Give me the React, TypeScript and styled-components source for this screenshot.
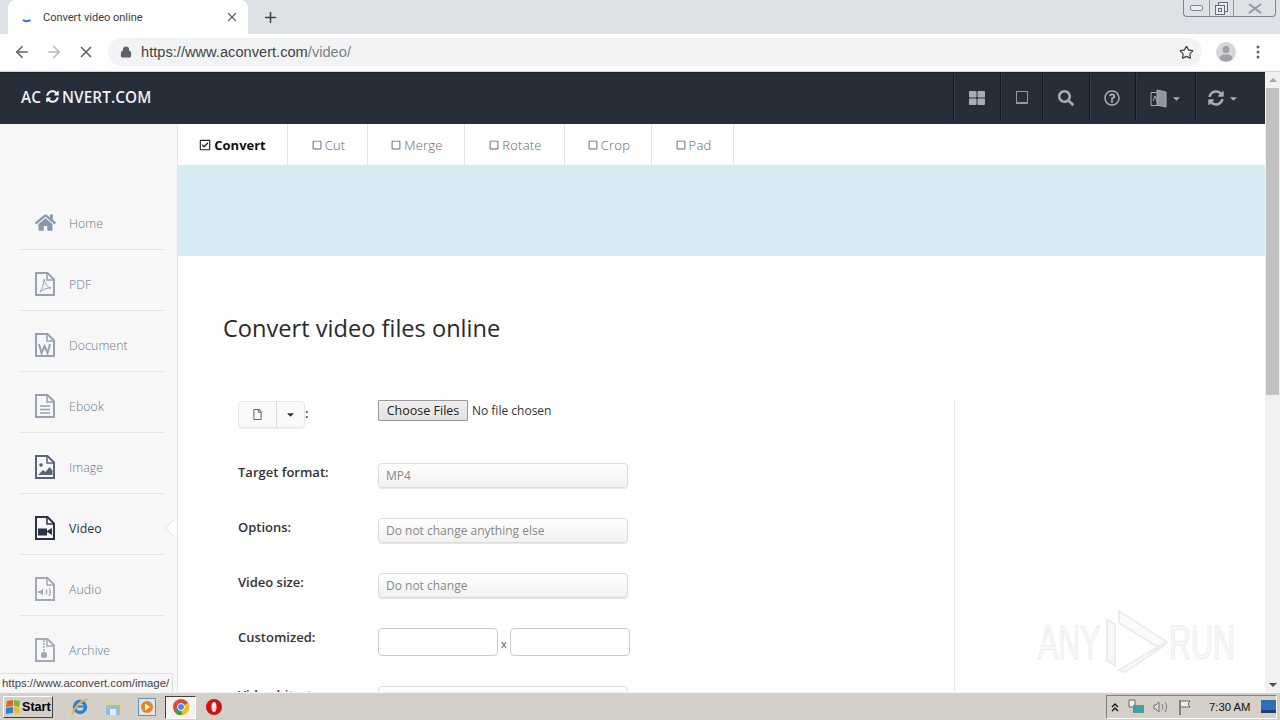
import React from "react";
import styled, { createGlobalStyle } from "styled-components";
import { FaHome, FaThLarge, FaSearch, FaRegQuestionCircle, FaSyncAlt, FaRegCheckSquare, FaRegSquare, FaCaretDown, FaRegFile } from "react-icons/fa";
import { ArrowLeft, ArrowRight, X, Plus, Star, Lock } from "lucide-react";

const Global = createGlobalStyle`
  html, body { margin: 0; padding: 0; overflow: hidden; background: #fff; }
  * { box-sizing: border-box; }
`;

const Window = styled.div`
  width: 1280px; height: 720px; display: flex; flex-direction: column; position: relative; overflow: hidden;
  font-family: "Open Sans", sans-serif;
`;
const TabStrip = styled.div`
  height: 34px; flex: none; background: #dee1e6; display: flex; padding-left: 8px;
`;
const Tab = styled.div`
  width: 240px; background: #fff; border-radius: 8px 8px 0 0; display: flex; align-items: center;
  padding: 0 9px 0 14px; font: 11px Roboto, sans-serif; color: #3c4043;
`;
const TabSpinner = styled.svg`width: 10px; height: 16px; margin-right: 11px; margin-top: 4px; flex: none;`;
const TabTitle = styled.span`flex: 1;`;
const NewTab = styled.div`
  width: 32px; margin-left: 6px; display: flex; align-items: center; justify-content: center; color: #444;
`;
const WinControls = styled.div`
  margin-left: auto; margin-right: 4px; align-self: flex-start; width: 93px; height: 17px; display: flex;
  border: 1px solid #7d8796; border-top: none; border-radius: 0 0 4px 4px; color: #59626e;
`;
const WinBtn = styled.div<{ $w: number; $sep?: boolean }>`
  width: ${p => p.$w}px; display: flex; align-items: center; justify-content: center;
  border-right: ${p => (p.$sep ? "1px solid #8f98a5" : "none")};
`;
const Toolbar = styled.div`
  height: 38px; flex: none; background: #fff; display: flex; align-items: center; padding: 0 6px 1px; border-bottom: 1px solid #d5d5d5;
`;
const NavBtn = styled.div<{ $c?: string }>`
  width: 32px; height: 32px; display: flex; align-items: center; justify-content: center; color: ${p => p.$c || "#5f6368"};
`;
const Omni = styled.div`
  flex: 1; height: 28px; margin: 0 8px 0 6px; background: #f1f3f4; border-radius: 14px; display: flex; align-items: center;
  padding: 0 8px 0 12px; color: #5f6368;
`;
const Url = styled.div`
  flex: 1; margin-left: 9px; font: 14.65px "Liberation Sans", sans-serif; color: #808080;
  b { font-weight: 400; color: #444; }
`;
const Avatar = styled.div`
  width: 20px; height: 20px; border-radius: 50%; background: #d5d7da; overflow: hidden; display: flex;
`;
const Page = styled.div`flex: 1; min-height: 0; display: flex; position: relative; overflow: hidden;`;
const PageBody = styled.div`flex: 1; min-width: 0; display: flex; flex-direction: column;`;
const Scrollbar = styled.div`
  width: 15px; flex: none; background: #f1f1f1; display: flex; flex-direction: column; align-items: center;
`;
const ScrollArrow = styled.div<{ $up?: boolean }>`
  height: 15px; width: 100%; flex: none; display: flex; align-items: center; justify-content: center;
  &::after { content: ""; border-left: 4px solid transparent; border-right: 4px solid transparent;
    ${p => (p.$up ? "border-bottom: 4px solid #a3a3a3;" : "border-top: 4px solid #505050;")} }
`;
const ScrollThumb = styled.div`width: 13px; height: 307px; background: #c1c1c1; margin-top: 1px;`;
const ScrollRest = styled.div`flex: 1;`;

const Header = styled.header`
  height: 52px; flex: none; background: #262e3a; display: flex; padding-bottom: 4px; border-top: 1px solid #1b2029; color: #fff;
`;
const Logo = styled.div`
  display: flex; align-items: center; padding-left: 21px; font-size: 15.3px; font-weight: 600; color: #eef0f2; letter-spacing: .1px;
  svg { margin: 0 3px 0 5px; }
`;
const HeaderSpacer = styled.div`flex: 1;`;
const HeadBtn = styled.div<{ $w: number; $pr?: number }>`
  width: ${p => p.$w}px; display: flex; align-items: center; justify-content: center; gap: 4px; color: #a7adb6;
  border-left: 1px solid #14181e; box-shadow: inset 1px 0 0 #323a47; padding-top: 3px; padding-right: ${p => p.$pr || 0}px;
`;
const Body = styled.div`flex: 1; min-height: 0; display: flex;`;
const Sidebar = styled.nav`
  width: 178px; flex: none; background: #f7f7f8; border-right: 1px solid #e6e6e6; padding: 65px 13px 0 20px; overflow: hidden;
`;
const NavItem = styled.div<{ $active?: boolean; $c: string }>`
  height: 61px; padding: 22px 0 15px 15px; border-bottom: 1px solid #e4e4e6; display: flex; align-items: center; gap: 14px; position: relative;
  font-size: 12.3px; color: ${p => (p.$active ? "#2a3343" : "#6d7785")}; font-weight: ${p => (p.$active ? 400 : 300)}; letter-spacing: .1px;
  svg { flex: none; color: ${p => p.$c}; }
`;
const NavLabel = styled.span`padding-top: 2px;`;
const HomeGlyph = styled.span`display: flex; width: 20px;`;
const Notch = styled.span`
  position: absolute; right: -15px; top: 28px; width: 12px; height: 12px; background: #fff; transform: rotate(45deg);
  border-left: 1px solid #e6e6e6; border-bottom: 1px solid #e6e6e6;
`;
const Main = styled.main`flex: 1; min-width: 0; background: #fff; overflow: hidden; display: flex; flex-direction: column;`;
const Tabs = styled.div`height: 42px; flex: none; display: flex; border-bottom: 1px solid #e4e6e8;`;
const TabItem = styled.div<{ $w: number; $on?: boolean }>`
  width: ${p => p.$w}px; display: flex; align-items: center; justify-content: center; gap: 3px; border-right: 1px solid #e3e3e3;
  font-size: 13px; font-weight: ${p => (p.$on ? 700 : 300)}; color: ${p => (p.$on ? "#111" : "#666")};
  letter-spacing: ${p => (p.$on ? 0 : ".2px")}; padding-left: ${p => (p.$on ? 0 : 2)}px;
  svg { color: ${p => (p.$on ? "#222" : "#666")}; }
`;
const Band = styled.div`height: 90px; flex: none; background: #d7ebf5;`;
const Content = styled.div`padding-left: 45px; flex: 1;`;
const Title = styled.h1`
  margin: 56px 0 56px; font-size: 23.6px; line-height: 32px; font-weight: 400; color: #2a2a2a;
`;
const Form = styled.div`
  margin-left: 15px; width: 717px; border-right: 1px solid #ececec; height: 400px;
`;
const Row = styled.div<{ $h: number }>`
  height: ${p => p.$h}px; display: flex; align-items: flex-start;
`;
const Label = styled.div`
  width: 140px; flex: none; font-size: 13px; line-height: 18px; font-weight: 600; color: #333;
`;
const FileLabel = styled.div`
  width: 140px; flex: none; display: flex; align-items: center; font-size: 13px; font-weight: 600; color: #333; padding-top: 1px;
`;
const Colon = styled.span`padding-bottom: 3px;`;
const Widget = styled.div`
  display: flex; height: 27px; width: 67px; border: 1px solid #e6e6e6; border-radius: 4px; background: #fafafa; box-shadow: 0 1px 1px #eee; color: #666;
`;
const WidgetPart = styled.div<{ $w: number; $sep?: boolean }>`
  width: ${p => p.$w}px; display: flex; align-items: center; justify-content: center; border-right: ${p => (p.$sep ? "1px solid #ddd" : "none")};
`;
const FileInput = styled.input`
  font: 12px "Open Sans", sans-serif; color: #333; width: 200px; height: 21px;
  &::file-selector-button {
    font: 12.5px "Open Sans", sans-serif; height: 21px; width: 90px; margin-right: 4px; padding: 0; background: linear-gradient(#f0f0f0, #e2e2e2);
    border: 1px solid #9a9a9a; border-radius: 1px; color: #222;
  }
`;
const Select = styled.div`
  width: 250px; height: 25px; border: 1px solid #dcdcdc; border-radius: 4px; background: linear-gradient(#fff, #f1f1f1);
  box-shadow: 0 1px 1px #e4e4e4; font-size: 12px; line-height: 23px; padding-left: 7px; color: #888;
`;
const TextBox = styled.input`
  width: 120px; height: 28px; border: 1px solid #ccc; border-radius: 4px; background: #fff; padding: 0;
`;
const Times = styled.span`width: 12px; text-align: center; font-size: 11px; color: #555; line-height: 28px; padding-top: 2px;`;

const Tooltip = styled.div`
  position: absolute; left: 0; bottom: 0; height: 19px; width: 173px; background: #f8f8f8; border: 1px solid #dedede; border-left: none; border-bottom: none;
  padding-left: 2px; font: 11.4px/18px "Liberation Sans", sans-serif; color: #444; border-radius: 0 2px 0 0; white-space: nowrap;
`;
const Watermark = styled.div`
  position: absolute; left: 1036px; top: 538px; width: 200px; height: 64px; pointer-events: none;
`;
const WmText = styled.span<{ $ml: number }>`
  position: absolute; left: ${p => p.$ml}px; top: 1px; font: 400 49px/62px "Liberation Sans", sans-serif; transform: scaleX(.62); transform-origin: left center;
  color: #f8f8f8; -webkit-text-stroke: 1px #ebebeb;
`;
const WmLogo = styled.svg`position: absolute; left: 68px; top: 0;`;

const Taskbar = styled.footer`
  height: 28px; flex: none; background: #d4d0c8; border-top: 1px solid #f6f5f3; box-shadow: 0 -1px 0 #b5b2ab; display: flex; align-items: center; padding: 2px 3px 1px 3px;
`;
const StartBtn = styled.div`
  width: 50px; height: 22px; display: flex; align-items: center; gap: 0; padding-left: 1px; background: #d4d0c8;
  border: 1px solid; border-color: #fff #404040 #404040 #fff; font: 700 12.6px "Liberation Sans", sans-serif; color: #000;
`;
const QuickIcon = styled.div<{ $ml: number; $active?: boolean }>`
  margin-left: ${p => p.$ml}px; width: ${p => (p.$active ? "31px" : "18px")}; height: ${p => (p.$active ? "23px" : "18px")}; display: flex; align-items: center; justify-content: center; flex: none;
  ${p => (p.$active ? "background:#f4f3f0;border:1px solid;border-color:#404040 #fff #fff #404040;" : "")}
`;
const Tray = styled.div`
  margin-left: auto; width: 171px; height: 24px; display: flex; align-items: center; border: 1px solid; border-color: #808080 #fff #fff #808080;
  padding-left: 2px; font: 11.3px "Liberation Sans", sans-serif; color: #111;
`;
const TrayIcon = styled.div<{ $w: number }>`width: ${p => p.$w}px; display: flex; justify-content: center; flex: none; color: #666;`;
const Clock = styled.span`margin-left: 10px; width: 52px; flex: none;`;

const FileShape: React.FC<{ children?: React.ReactNode }> = ({ children }) => (
  <svg width="20" height="24" viewBox="0 0 20 24" fill="none" stroke="currentColor" strokeWidth="2">
    <path d="M1 1H12.5L19 7.5V23H1Z" />
    <path d="M12 1V8H19" strokeWidth="1.5" />
    {children}
  </svg>
);

const navItems: { label: string; c: string; active?: boolean; icon: React.ReactNode }[] = [
  { label: "Home", c: "#8b97aa", icon: <HomeGlyph><FaHome size={21} /></HomeGlyph> },
  { label: "PDF", c: "#98a1af", icon: <FileShape><path d="M9 7c1 5 3 8 7 9-4 0-8 1-11 4 2-3 4-8 4-13z" strokeWidth="1" /></FileShape> },
  { label: "Document", c: "#98a1af", icon: <FileShape><path d="M4 11l2.5 9 3-7 3 7L15 11" strokeWidth="2" /></FileShape> },
  { label: "Ebook", c: "#98a1af", icon: <FileShape><path d="M5 12h10M5 15.5h10M5 19h10" strokeWidth="1.5" /></FileShape> },
  { label: "Image", c: "#5b6476", icon: <FileShape><circle cx="6" cy="10" r="1.8" fill="currentColor" stroke="none" /><path d="M3 20l5-5 2.5 2 4-5 3 3.5V20z" fill="currentColor" stroke="none" /></FileShape> },
  { label: "Video", c: "#2a3345", active: true, icon: <FileShape><path d="M3 12.5h9v7H3zM12 15l5-3v7l-5-3z" fill="currentColor" stroke="none" /></FileShape> },
  { label: "Audio", c: "#a3aab6", icon: <FileShape><path d="M3 14h2l3-2.5v7L5 16H3z" fill="currentColor" stroke="none" /><path d="M11 12.5c1 1.5 1 3.5 0 5M14 11c1.6 2.5 1.6 5.500 0 8" strokeWidth="1.3" /></FileShape> },
  { label: "Archive", c: "#a3aab6", icon: <FileShape><path d="M8 3h2M8 6h2M8 9h2M8 12h2" strokeWidth="1.4" /><rect x="6" y="14" width="6" height="6" rx="2" fill="currentColor" stroke="none" /></FileShape> },
];

const tabs: { label: string; w: number; on?: boolean }[] = [
  { label: "Convert", w: 110, on: true },
  { label: "Cut", w: 80 },
  { label: "Merge", w: 97 },
  { label: "Rotate", w: 100 },
  { label: "Crop", w: 87 },
  { label: "Pad", w: 82 },
];

export default function App() {
  return (
    <Window>
      <Global />
      <TabStrip>
        <Tab>
          <TabSpinner viewBox="0 0 10 16"><path d="M1 9c2 1.500 5 1.500 7.500 0" stroke="#1a73e8" strokeWidth="2" fill="none" /></TabSpinner>
          <TabTitle>Convert video online</TabTitle>
          <X size={14} strokeWidth={2.2} color="#5f6368" />
        </Tab>
        <NewTab><Plus size={17} strokeWidth={2.2} /></NewTab>
        <WinControls>
          <WinBtn $w={26} $sep><svg width="13" height="7"><rect x=".5" y=".5" width="12" height="5" rx="1.500" fill="#eef0f3" stroke="#7f8896" /></svg></WinBtn>
          <WinBtn $w={25} $sep><svg width="13" height="13" fill="#e8eaee" stroke="#636c78"><rect x="3.500" y=".5" width="9" height="9" /><rect x=".5" y="3.500" width="9" height="9" /><rect x="3.500" y="6.500" width="3" height="3" /></svg></WinBtn>
          <WinBtn $w={41}><svg width="14" height="11" stroke="#8f98a5" fill="none"><path d="M1 1l12 9M13 1L1 10" strokeWidth="2" /></svg></WinBtn>
        </WinControls>
      </TabStrip>
      <Toolbar>
        <NavBtn><ArrowLeft size={18} strokeWidth={2.2} /></NavBtn>
        <NavBtn $c="#b5b8bc"><ArrowRight size={18} strokeWidth={2.2} /></NavBtn>
        <NavBtn><X size={18} strokeWidth={2.2} /></NavBtn>
        <Omni>
          <Lock size={12} fill="#5f6368" strokeWidth={2.4} />
          <Url><b>https://www.aconvert.com</b>/video/</Url>
          <Star size={15} strokeWidth={2} color="#444" />
        </Omni>
        <NavBtn>
          <Avatar><svg viewBox="0 0 20 20" width="20" height="20" fill="#9ea1a5"><circle cx="10" cy="7.500" r="3.500" /><ellipse cx="10" cy="16" rx="6.500" ry="3.800" /></svg></Avatar>
        </NavBtn>
        <NavBtn>
          <svg width="4" height="14" fill="#5f6368"><circle cx="2" cy="2" r="1.500" /><circle cx="2" cy="7" r="1.500" /><circle cx="2" cy="12" r="1.500" /></svg>
        </NavBtn>
      </Toolbar>
      <Page>
        <PageBody>
          <Header>
            <Logo>AC<FaSyncAlt size={13} />NVERT.COM</Logo>
            <HeaderSpacer />
            <HeadBtn $w={47}><FaThLarge size={16} /></HeadBtn>
            <HeadBtn $w={42}><svg width="12" height="14" fill="none" stroke="currentColor" strokeOpacity=".85"><path d="M.5.5h11v11H.5z" /><path d="M0 12.500h12" /></svg></HeadBtn>
            <HeadBtn $w={47}><FaSearch size={16} /></HeadBtn>
            <HeadBtn $w={46} $pr={1}><FaRegQuestionCircle size={16} /></HeadBtn>
            <HeadBtn $w={60}>
              <svg width="17" height="19" viewBox="0 0 17 19" fill="none" stroke="currentColor"><path d="M1 3.500h8v13H1z" /><path d="M7 1l9 2v15l-9-2z" fill="#8f95a0" /><path d="M3 12l2-5 2 5" strokeWidth="1" /></svg>
              <FaCaretDown size={11} />
            </HeadBtn>
            <HeadBtn $w={70} $pr={14}><FaSyncAlt size={16} /><FaCaretDown size={11} /></HeadBtn>
          </Header>
          <Body>
            <Sidebar>
              {navItems.map(n => (
                <NavItem key={n.label} $c={n.c} $active={n.active}>
                  {n.icon}
                  <NavLabel>{n.label}</NavLabel>
                  {n.active && <Notch />}
                </NavItem>
              ))}
            </Sidebar>
            <Main>
              <Tabs>
                {tabs.map(t => (
                  <TabItem key={t.label} $w={t.w} $on={t.on}>
                    {t.on ? <FaRegCheckSquare size={12} /> : <FaRegSquare size={10} />}
                    <span>{t.label}</span>
                  </TabItem>
                ))}
              </Tabs>
              <Band />
              <Content>
                <Title>Convert video files online</Title>
                <Form>
                  <Row $h={63}>
                    <FileLabel>
                      <Widget>
                        <WidgetPart $w={38} $sep><FaRegFile size={11} /></WidgetPart>
                        <WidgetPart $w={27}><FaCaretDown size={11} color="#333" /></WidgetPart>
                      </Widget>
                      <Colon>:</Colon>
                    </FileLabel>
                    <FileInput type="file" multiple />
                  </Row>
                  <Row $h={55}><Label>Target format:</Label><Select>MP4</Select></Row>
                  <Row $h={55}><Label>Options:</Label><Select>Do not change anything else</Select></Row>
                  <Row $h={55}><Label>Video size:</Label><Select>Do not change</Select></Row>
                  <Row $h={58}><Label>Customized:</Label><TextBox /><Times>x</Times><TextBox /></Row>
                  <Row $h={40}><Label>Video bitrate:</Label><Select /></Row>
                </Form>
              </Content>
            </Main>
          </Body>
        </PageBody>
        <Scrollbar>
          <ScrollArrow $up />
          <ScrollThumb />
          <ScrollRest />
          <ScrollArrow />
        </Scrollbar>
        <Tooltip>https://www.aconvert.com/image/</Tooltip>
        <Watermark>
          <WmText $ml={2}>ANY</WmText>
          <WmLogo width="66" height="64" viewBox="0 0 66 64" fill="none" stroke="#ececec" strokeWidth="2">
            <path d="M3 10v40l8 6V14z" fill="#f8f8f8" />
            <path d="M15 1l48 31-9 5L15 13z" fill="#fafafa" />
            <path d="M15 60l36-21 10 -4-40 27z" fill="#fafafa" />
          </WmLogo>
          <WmText $ml={133}>RUN</WmText>
        </Watermark>
      </Page>
      <Taskbar>
        <StartBtn>
          <svg width="17" height="16" viewBox="0 0 17 16"><path d="M2 2l6-1v6l-7 1z" fill="#e2612d" /><path d="M9 1l6 1-1 6-5-1z" fill="#7cb82f" /><path d="M1 9l7-1v6l-7 1z" fill="#2d7fd0" /><path d="M9 8l5 1 1 6-6-1z" fill="#efbb2d" /></svg>
          Start
        </StartBtn>
        <QuickIcon $ml={18}>
          <svg width="18" height="18" viewBox="0 0 18 18" fill="none"><circle cx="9" cy="9" r="5.500" stroke="#2a7fd4" strokeWidth="3.400" /><path d="M4 8.500h10" stroke="#2a7fd4" strokeWidth="2" /><path d="M1 17C3 9 10 2 17 1" stroke="#e9b73c" strokeWidth="1.800" /></svg>
        </QuickIcon>
        <QuickIcon $ml={15}>
          <svg width="18" height="18" viewBox="0 0 18 18"><path d="M1 3h6l1 2h9v12H1z" fill="#e9d38a" /><path d="M2 7h14v10H2z" fill="#8fc1de" /><path d="M6 11h6v6H6z" fill="#e4eef4" /></svg>
        </QuickIcon>
        <QuickIcon $ml={16}>
          <svg width="18" height="18" viewBox="0 0 18 18"><rect x=".5" y=".5" width="17" height="17" fill="#d9e6f2" stroke="#5b93c9" /><circle cx="9" cy="9" r="6" fill="#ea8420" /><path d="M7 5.500l5 3.500-5 3.500z" fill="#fff" /></svg>
        </QuickIcon>
        <QuickIcon $ml={9} $active>
          <svg width="16" height="16" viewBox="0 0 16 16"><circle cx="8" cy="8" r="8" fill="#dd4b39" /><path d="M8 8L1 12a8 8 0 0 0 8 4z" fill="#2fa14f" /><path d="M8 8l1 8a8 8 0 0 0 6-12z" fill="#f4c20d" /><circle cx="8" cy="8" r="3.500" fill="#4285f4" stroke="#fff" /></svg>
        </QuickIcon>
        <QuickIcon $ml={9}>
          <svg width="16" height="16" viewBox="0 0 16 16"><circle cx="8" cy="8" r="8" fill="#cc1316" /><ellipse cx="8" cy="8" rx="2.500" ry="5" fill="#f6e6e6" /></svg>
        </QuickIcon>
        <Tray>
          <TrayIcon $w={12}><svg width="8" height="9" fill="none" stroke="#111" strokeWidth="1.400"><path d="M1 4l3-3 3 3M1 8l3-3 3 3" /></svg></TrayIcon>
          <TrayIcon $w={30}><svg width="17" height="16" viewBox="0 0 17 16"><path d="M1 1h6v7H1z" fill="#eee" stroke="#666" /><rect x="5" y="6" width="11" height="8" fill="#4b9c9e" /></svg></TrayIcon>
          <TrayIcon $w={20}><svg width="16" height="14" viewBox="0 0 16 14" fill="none" stroke="#777"><path d="M1 5h2l3-3v10L3 9H1z" fill="#ddd" /><path d="M9 4c1 2 1 4 0 6M12 2c2 3 2 7 0 10" /></svg></TrayIcon>
          <TrayIcon $w={28}><svg width="15" height="16" viewBox="0 0 15 16" fill="none" stroke="#666"><path d="M2 1v15" strokeWidth="1.500" /><path d="M3 2h9l-2 3 2 3H3" fill="#f1f0ec" /></svg></TrayIcon>
          <Clock>7:30 AM</Clock>
          <svg width="15" height="14" viewBox="0 0 15 14"><rect width="15" height="12" fill="#2f6fb8" /><rect y="10" width="15" height="3" fill="#1e3f6e" /></svg>
        </Tray>
      </Taskbar>
    </Window>
  );
}
